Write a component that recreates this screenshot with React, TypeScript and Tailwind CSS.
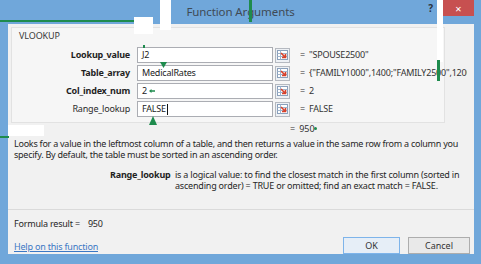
import React from "react";

const rows = [
  { label: "Lookup_value", input: "J2", value: "\"SPOUSE2500\"", required: true },
  { label: "Table_array", input: "MedicalRates", value: "{\"FAMILY1000\",1400;\"FAMILY2500\",1200;\"FAMILY5000\",900}", required: true },
  { label: "Col_index_num", input: "2", value: "2", required: true },
  { label: "Range_lookup", input: "FALSE", value: "FALSE", required: false },
];

const RefButton = () => (
  <div className="w-[15px] h-[15px] border border-[#b5b9c0] bg-[#eef1f5] flex items-center justify-center">
    <svg width="11" height="10" viewBox="0 0 11 10">
      <rect x="0.5" y="0.5" width="10" height="9" fill="#fff" stroke="#8aa0bb" />
      <line x1="0.5" y1="3.5" x2="10.5" y2="3.5" stroke="#9fb4cc" />
      <line x1="0.5" y1="6.5" x2="10.5" y2="6.5" stroke="#9fb4cc" />
      <line x1="3.5" y1="0.5" x2="3.5" y2="9.5" stroke="#9fb4cc" />
      <path d="M4 3 L8.5 7.5 M5 7.5 L8.5 7.5 L8.5 4" stroke="#d8402a" strokeWidth="1.6" fill="none" />
    </svg>
  </div>
);

export default function App() {
  return (
    <div className="relative w-[481px] h-[264px] overflow-hidden bg-[#70a7da] flex flex-col font-['Noto_Sans',sans-serif] text-[9px] text-[#2b2b2b]">
      {/* Title bar */}
      <div className="h-[24px] grid grid-cols-[1fr_auto_1fr]">
        <div />
        <div className="pt-[3px] text-[11.5px] text-[#3f4a55] tracking-[-0.1px]">Function Arguments</div>
        <div className="flex justify-end items-start pr-[7px]">
          <span className="mt-[1px] mr-[10px] text-[10px] font-bold text-[#2a3440]">?</span>
          <div className="w-[31px] h-[16px] bg-[#c75050] flex items-center justify-center text-white text-[11px] leading-none">
            ×
          </div>
        </div>
      </div>

      {/* Body */}
      <div className="flex-1 ml-[8px] mr-[7px] mb-[10px] bg-[#f1f1f1] flex flex-col">
        {/* Argument group */}
        <div className="mt-[3px] ml-[3px] w-[434px] border border-[#e2e2e2] bg-[#f6f6f6] pt-[2px] pb-[4px] flex flex-col">
          <div className="ml-[7px] h-[11px] leading-[11px] text-[#3a3a3a] tracking-[-0.1px]">VLOOKUP</div>
          <div className="mt-[5px] flex flex-col">
            {rows.map((r, i) => (
              <div key={r.label} className="h-[18px] flex items-center">
                <div
                  className={`w-[118px] shrink-0 text-right tracking-[-0.2px] ${r.required ? "font-bold text-[#1f1f1f]" : "text-[#2b2b2b]"}`}
                >
                  {r.label}
                </div>
                <div className="ml-[7px] w-[136px] shrink-0 h-[16px] border border-[#abadb3] bg-white flex items-center pl-[4px] text-[#222] tracking-[-0.2px]">
                  {r.input}
                  {i === 3 && <span className="ml-[1px] w-px h-[11px] bg-[#111]" />}
                </div>
                <div className="ml-[2px] shrink-0">
                  <RefButton />
                </div>
                <div className="ml-[10px] w-[167px] shrink-0 whitespace-nowrap overflow-hidden text-[#333] tracking-[-0.2px]">
                  <span className="mr-[4px]">=</span>
                  {r.value}
                </div>
              </div>
            ))}
          </div>
        </div>

        <div className="ml-[282px] h-[10px] leading-[10px] mt-[1px] text-[#333]">
          <span className="mr-[4px]">=</span>950
        </div>

        <div className="mt-[4px] ml-[6px] leading-[11px] tracking-[-0.25px] whitespace-nowrap text-[#262626]">
          <div>Looks for a value in the leftmost column of a table, and then returns a value in the same row from a column you</div>
          <div>specify. By default, the table must be sorted in an ascending order.</div>
        </div>

        <div className="mt-[10px] ml-[102px] flex leading-[10.5px] tracking-[-0.2px] whitespace-nowrap">
          <div className="w-[65px] font-bold text-[#1f1f1f]">Range_lookup</div>
          <div className="text-[#262626]">
            <div>is a logical value: to find the closest match in the first column (sorted in</div>
            <div>ascending order) = TRUE or omitted; find an exact match = FALSE.</div>
          </div>
        </div>

        <div className="mt-[18px] h-px bg-[#dadada]" />

        <div className="mt-[9px] ml-[6px] h-[10px] leading-[10px] flex text-[#262626] tracking-[-0.2px]">
          <span>Formula result =</span>
          <span className="ml-[8px]">950</span>
        </div>

        <div className="mt-[8px] flex items-center justify-between pr-[4px]">
          <span className="ml-[6px] mt-[2px] text-[#3b78c4] underline tracking-[-0.2px]">Help on this function</span>
          <div className="flex gap-[8px]">
            <button className="w-[57px] h-[17px] border border-[#7eb4ea] bg-[#e6eef7] text-[#333]">OK</button>
            <button className="w-[62px] h-[17px] border border-[#adadad] bg-[#e9e9e9] text-[#333]">Cancel</button>
          </div>
        </div>
      </div>

      {/* Callout overlays */}
      <div className="absolute left-0 top-[20px] w-[134px] h-[2px] bg-[#1e8b4d]" />
      <div className="absolute left-[134px] top-[17px] w-[19px] h-[17px] bg-white" />
      <div className="absolute left-[160px] top-0 w-[11px] h-[30px] bg-white" />
      <div className="absolute left-[249px] top-0 w-[3px] h-[22px] bg-[#1e8b4d]" />
      <div className="absolute left-[437px] top-0 w-[6px] h-[62px] bg-white" />
      <div className="absolute left-[437px] top-[60px] w-[3px] h-[21px] bg-[#1e8b4d]" />
      <div className="absolute left-[8px] top-[125px] w-[36px] h-[11px] bg-white" />
      <div className="absolute left-0 top-[136px] w-[9px] h-[2px] bg-[#1e8b4d]" />
      {/* small pointers */}
      <div className="absolute left-[143px] top-[45px] w-[2px] h-[3px] bg-[#1e8b4d]" />
      <svg className="absolute left-[160px] top-[62px]" width="7" height="6" viewBox="0 0 7 6">
        <path d="M0 0 H7 L3.5 6 Z" fill="#1e8b4d" />
      </svg>
      <svg className="absolute left-[149px] top-[89px]" width="6" height="4" viewBox="0 0 6 4">
        <path d="M0 2 L2.5 0 V1.3 H6 V2.7 H2.5 V4 Z" fill="#1e8b4d" />
      </svg>
      <svg className="absolute left-[149px] top-[116px]" width="8" height="9" viewBox="0 0 8 9">
        <path d="M4 0 L8 9 H0 Z" fill="#1e8b4d" />
      </svg>
      <div className="absolute left-[314px] top-[127px] w-[3px] h-[3px] rounded-full bg-[#1e8b4d]" />
    </div>
  );
}
